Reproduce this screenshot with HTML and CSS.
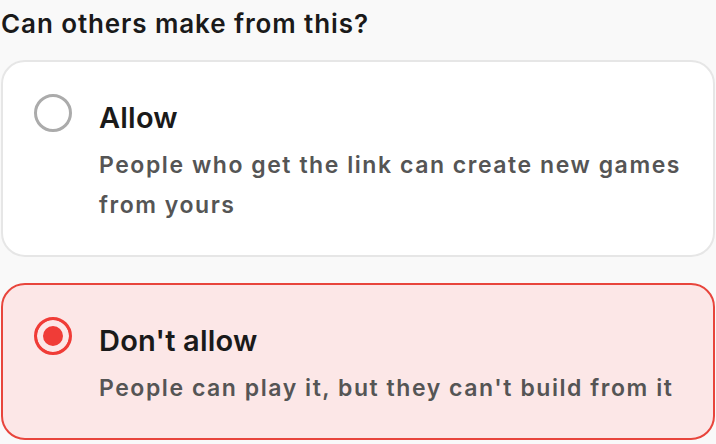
FILE: index.html
```html
<!DOCTYPE html>
<html lang="en">
<head>
  <meta charset="UTF-8">
  <meta name="viewport" content="width=device-width, initial-scale=1.0">
  <title>Remix settings</title>
  <link rel="stylesheet" href="styles.css">
</head>
<body>
  <div class="panel">
    <h2 class="question">Can others make from this?</h2>

    <div class="options">
      <!-- Allow -->
      <label class="option">
        <span class="radio"></span>
        <span class="option-text">
          <span class="option-title">Allow</span>
          <span class="option-desc">People who get the link can create new games from yours</span>
        </span>
      </label>

      <!-- Don't allow (selected) -->
      <label class="option selected">
        <span class="radio"></span>
        <span class="option-text">
          <span class="option-title">Don't allow</span>
          <span class="option-desc">People can play it, but they can't build from it</span>
        </span>
      </label>
    </div>
  </div>
</body>
</html>
```

FILE: styles.css
```css
/* Base */
body {
  margin: 0;
  padding: 0;
  background: #f9f9f9;
  font-family: 'Inter', 'Roboto', sans-serif;
  color: #1a1a1a;
}

.panel {
  padding: 0 1px;
}

/* Heading */
.question {
  margin: 0;
  padding-top: 6px;
  font-size: 26px;
  line-height: 36px;
  font-weight: 600;
  letter-spacing: 0.9px;
}

/* Options */
.options {
  display: flex;
  flex-direction: column;
  gap: 26px;
  margin-top: 18px;
}

.option {
  display: flex;
  align-items: flex-start;
  gap: 27px;
  padding: 38px 20px 30px 31px;
  background: #ffffff;
  border: 2px solid #e6e6e6;
  border-radius: 24px;
  cursor: pointer;
}

.radio {
  flex: none;
  box-sizing: border-box;
  width: 38px;
  height: 38px;
  margin-top: -6px;
  border: 3px solid #ababab;
  border-radius: 50%;
}

.option-text {
  display: flex;
  flex-direction: column;
}

.option-title {
  font-size: 29px;
  line-height: 36px;
  font-weight: 600;
  letter-spacing: 0.2px;
  color: #1a1a1a;
}

.option-desc {
  margin-top: 9px;
  font-size: 23px;
  line-height: 40px;
  font-weight: 600;
  letter-spacing: 1.55px;
  color: #555555;
}

/* Selected state */
.option.selected {
  background: #fce7e7;
  border-color: #e8453c;
}

.option.selected .radio {
  border: 3px solid #f03c37;
  background: #f03c37;
  box-shadow: inset 0 0 0 6px #fce7e7;
}
```
